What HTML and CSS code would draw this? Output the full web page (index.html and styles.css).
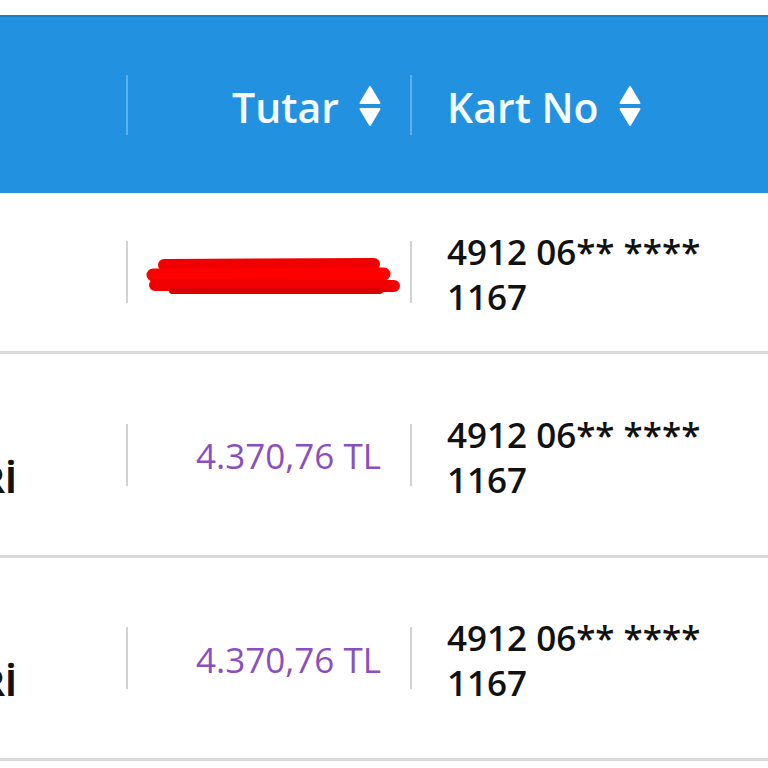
FILE: index.html
```html
<!DOCTYPE html>
<html lang="tr">
<head>
<meta charset="utf-8">
<title>Tablo</title>
<link rel="stylesheet" href="styles.css">
</head>
<body>
<div class="page">
  <div class="table">
    <div class="row head">
      <div class="cell c1"></div>
      <div class="cell c2">
        <span class="divider"></span>
        <div class="content right">
          <span class="htext">Tutar</span>
          <svg class="sort" viewBox="0 0 22 42" width="22" height="42"><path d="M11 2 L20.5 18 L1.5 18 Z" fill="#fff" stroke="#fff" stroke-width="2" stroke-linejoin="round"/><path d="M1.5 24 L20.5 24 L11 40 Z" fill="#fff" stroke="#fff" stroke-width="2" stroke-linejoin="round"/></svg>
        </div>
      </div>
      <div class="cell c3">
        <span class="divider"></span>
        <div class="content left">
          <span class="htext">Kart No</span>
          <svg class="sort" viewBox="0 0 22 42" width="22" height="42"><path d="M11 2 L20.5 18 L1.5 18 Z" fill="#fff" stroke="#fff" stroke-width="2" stroke-linejoin="round"/><path d="M1.5 24 L20.5 24 L11 40 Z" fill="#fff" stroke="#fff" stroke-width="2" stroke-linejoin="round"/></svg>
        </div>
      </div>
    </div>

    <div class="row body r1">
      <div class="cell c1"></div>
      <div class="cell c2">
        <span class="divider"></span>
        <div class="content right">
          <svg class="redact" viewBox="0 0 256 40" width="256" height="40"><path d="M18 8 L228 7" stroke="#f00000" stroke-width="12" stroke-linecap="round"/><path d="M7 18 L238 17" stroke="#ff0000" stroke-width="13" stroke-linecap="round"/><path d="M9 28 L248 29" stroke="#f00000" stroke-width="12" stroke-linecap="round"/><path d="M26 34 L234 34" stroke="#d80000" stroke-width="6" stroke-linecap="round"/></svg>
        </div>
      </div>
      <div class="cell c3">
        <span class="divider"></span>
        <div class="content left card">4912 06** ****<br>1167</div>
      </div>
    </div>

    <div class="row body r2">
      <div class="cell c1">
        <div class="desc">
          <div class="l1">MARKET</div>
          <div class="l2">DİĞERLERİ</div>
        </div>
      </div>
      <div class="cell c2">
        <span class="divider"></span>
        <div class="content right amount">4.370,76 TL</div>
      </div>
      <div class="cell c3">
        <span class="divider"></span>
        <div class="content left card">4912 06** ****<br>1167</div>
      </div>
    </div>

    <div class="row body r3">
      <div class="cell c1">
        <div class="desc">
          <div class="l1">MARKET</div>
          <div class="l2">DİĞERLERİ</div>
        </div>
      </div>
      <div class="cell c2">
        <span class="divider"></span>
        <div class="content right amount">4.370,76 TL</div>
      </div>
      <div class="cell c3">
        <span class="divider"></span>
        <div class="content left card">4912 06** ****<br>1167</div>
      </div>
    </div>
  </div>
</div>
</body>
</html>
```

FILE: styles.css
```css
html, body {
  margin: 0;
  padding: 0;
  background: #ffffff;
  overflow: hidden;
}

.page {
  padding-top: 15px;
  font-family: "Open Sans", "Noto Sans", sans-serif;
}

.table {
  width: 768px;
}

.row {
  display: grid;
  grid-template-columns: 126px 284px 1fr;
}

.head {
  background: #2291df;
  border-top: 2px solid #1c7fc9;
  height: 176px;
}

.body {
  border-bottom: 3px solid #d9d9d9;
}

.r1 { height: 158px; }
.r2 { height: 201px; }
.r3 { height: 200px; }

.cell {
  display: flex;
  align-items: center;
  min-width: 0;
}

.c1 {
  overflow: hidden;
}

.divider {
  flex: none;
  width: 2px;
  height: 62px;
  background: #d2d2d2;
}

.head .divider {
  height: 60px;
  background: #5cb0ec;
}

.content {
  flex: 1;
  display: flex;
  align-items: center;
}

.content.right {
  justify-content: flex-end;
  padding-right: 29px;
}

.content.left {
  justify-content: flex-start;
  padding-left: 35px;
}

.htext {
  color: #f4fbff;
  font-size: 41px;
  font-weight: 600;
  padding-top: 4px;
}

.sort {
  margin-left: 20px;
  display: block;
  margin-top: 2px;
}

.redact {
  display: block;
  margin-right: -21px;
  margin-top: 9px;
}

.card {
  display: block;
  color: #111111;
  font-size: 35px;
  font-weight: 600;
  line-height: 45px;
  padding-top: 4px;
}

.amount {
  color: #8a4fbf;
  font-size: 35px;
  font-weight: 400;
  padding-right: 28px;
  padding-top: 2px;
}

.desc {
  flex: none;
  width: 200px;
  margin-left: -183px;
  color: #111111;
  font-size: 36px;
  font-weight: 700;
  line-height: 45px;
  white-space: nowrap;
  padding-top: 4px;
}

.desc .l1 {
  text-align: left;
}

.desc .l2 {
  text-align: right;
}
```
